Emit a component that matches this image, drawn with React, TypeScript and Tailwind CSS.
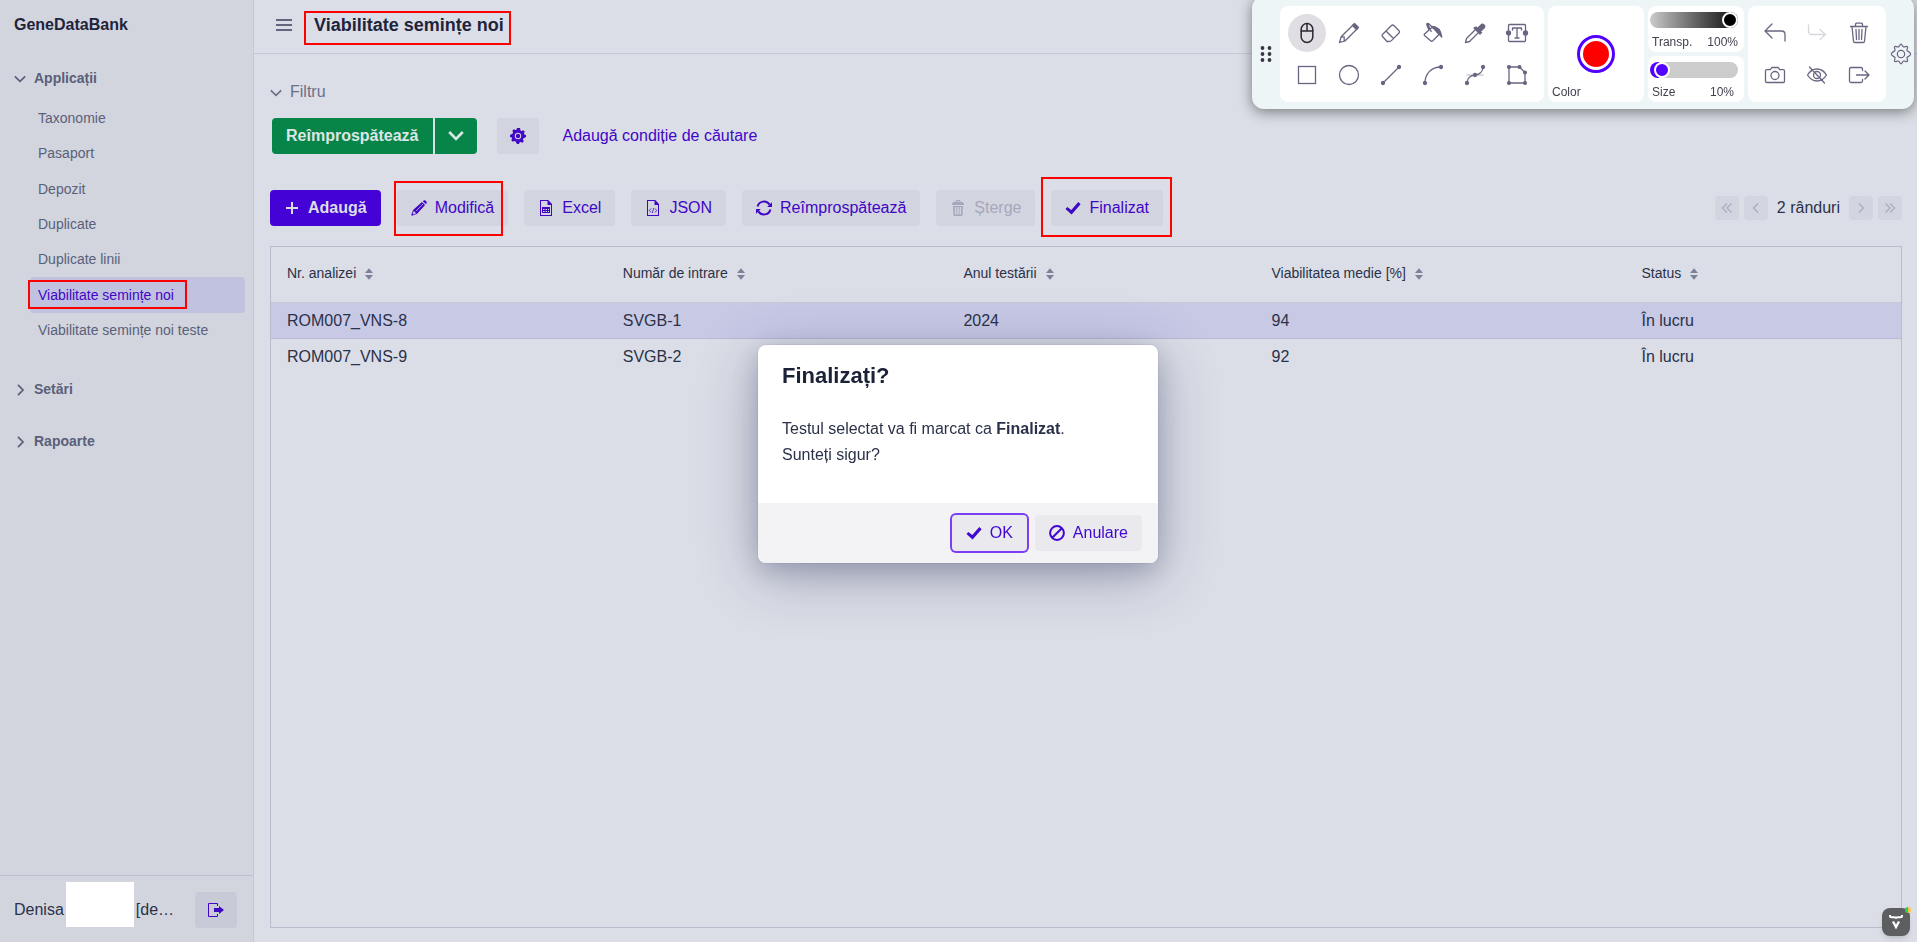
import { useState, type ReactNode } from "react";

type IconProps = { children: ReactNode; className?: string };

/* 16px filled icons */
function Icon({ children, className = "size-4" }: IconProps) {
  return (
    <svg viewBox="0 0 16 16" fill="currentColor" aria-hidden="true" className={`shrink-0 ${className}`}>
      {children}
    </svg>
  );
}

/* 24px outline icons */
function Tool({ children, className = "size-6" }: IconProps) {
  return (
    <svg
      viewBox="0 0 24 24"
      fill="none"
      stroke="currentColor"
      strokeWidth="1.3"
      strokeLinecap="round"
      strokeLinejoin="round"
      aria-hidden="true"
      className={`shrink-0 ${className}`}
    >
      {children}
    </svg>
  );
}

const Chevron = ({ open }: { open: boolean }) => (
  <svg viewBox="0 0 12 12" fill="none" stroke="currentColor" strokeWidth="1.7" aria-hidden="true" className="size-3 shrink-0 translate-y-px">
    <path d={open ? "M.8 3.4 6 8.4l5.2-5" : "M4 .8 9 6l-5 5.2"} />
  </svg>
);

const Check = () => (
  <Icon>
    <path d="M15.6 4.2 13.3 1.9 6.3 9.9 2.3 6.9.5 8.9l6.1 5.5z" />
  </Icon>
);

const Refresh = () => (
  <Icon>
    <path
      d="M1.6 6.6A6.6 6.6 0 0 1 13.6 4.6M14.4 9.4A6.6 6.6 0 0 1 2.4 11.4"
      fill="none"
      stroke="currentColor"
      strokeWidth="2"
    />
    <path d="M16 2.2V7h-4.8zM0 13.8V9h4.8z" />
  </Icon>
);

const Pencil = () => (
  <Icon>
    <path d="M2.3 9.8 11 1.9l3.1 3.1-8 8.8L1 15.8.2 15zM11.8 1.2C13 0 14 0 15 1s1 2 0 3.200zM2.800 11l-1.100 3 .4.4 3-1.200z" fillRule="evenodd" />
    <path d="M5 11.200 12 4" stroke="#d2d5df" strokeWidth=".8" />
  </Icon>
);

const Sheet = () => (
  <Icon>
    <path d="M10.200 0H2v16h12V4zM13 15H3V1h6.500v4H13z" fillRule="evenodd" />
    <path d="M4 7v6h8V7zM5 9h1.500v1H5zm2.500 0H9v1H7.500zM10 9h1v1h-1zm-5 2h1.500v1H5zm2.500 0H9v1H7.500zm2.500 0h1v1h-1z" fillRule="evenodd" />
  </Icon>
);

const CodeFile = () => (
  <Icon>
    <path d="M10.200 0H2v16h12V4zM13 15H3V1h6.500v4H13z" fillRule="evenodd" />
    <path d="M6 8.500 4.300 10.500 6 12.500M10 8.500l1.700 2-1.700 2M8.700 8l-1.400 5" fill="none" stroke="currentColor" strokeWidth=".8" />
  </Icon>
);

const Trash = () => (
  <Icon>
    <path d="M13 3V2h-2.500V1.500C10.500.6 10 0 9 0H7C6 0 5.500.6 5.500 1.500V2H3v1H2v2h12V3zM6.500 1.300h3V2h-3zM3 6l.5 9c.1.600.400 1 1 1h7c.600 0 .900-.400 1-1l.500-9zm3.500 8.500H5L4.800 7h1.400zm2.200 0H7.300V7h1.400zm2.300 0H9.500L9.800 7h1.400z" fillRule="evenodd" />
  </Icon>
);

const Cog = () => (
  <Icon>
    <path d="M16 9V7l-1.700-.6-.4-1 .9-1.700-1.500-1.500-1.700.9-1-.4L10 0H7l-.6 1.700-1 .4-1.600-.8-1.500 1.500.8 1.600-.4 1L0 7v2l1.700.6.4 1-.8 1.700 1.500 1.500 1.600-.9 1 .4L7 16h2l.6-1.700 1-.4 1.700.9 1.500-1.500-.9-1.700.4-1zM8 12.500a4.500 4.500 0 1 1 0-9 4.500 4.500 0 0 1 0 9z" fillRule="evenodd" />
    <circle cx="8" cy="8" r="2.200" />
    <path d="M8 3a5 5 0 1 0 0 10A5 5 0 0 0 8 3zm0 1.800a3.200 3.200 0 1 1 0 6.400 3.200 3.200 0 0 1 0-6.400z" fillRule="evenodd" />
  </Icon>
);

const SignOut = () => (
  <Icon>
    <path d="M9.500 4V1.500h-9v13h9V12" fill="none" stroke="currentColor" />
    <path d="M6 6h5V4l5 4-5 4v-2H6z" />
  </Icon>
);

const Ban = () => (
  <Icon>
    <path d="m3.200 12.800 9.600-9.600M8 1.100a6.900 6.900 0 1 1 0 13.800A6.900 6.900 0 0 1 8 1.100z" fill="none" stroke="currentColor" strokeWidth="2" />
  </Icon>
);

const Sorter = () => (
  <svg viewBox="0 0 8 12" fill="#7d829b" aria-hidden="true" className="h-3 w-2 translate-y-px">
    <path d="M0 5 4 .3 8 5zM0 7h8l-4 4.700z" />
  </svg>
);

/* Highlight rectangle drawn over the page */
const Mark = ({ className }: { className: string }) => (
  <span aria-hidden="true" className={`pointer-events-none absolute border-2 border-[#ff0000] ${className}`} />
);

const apps = ["Taxonomie", "Pasaport", "Depozit", "Duplicate", "Duplicate linii", "Viabilitate semințe noi", "Viabilitate semințe noi teste"];

function Sidebar() {
  return (
    <aside className="flex w-[254px] shrink-0 flex-col border-r border-[#c6c9d5] bg-[#d2d5de]">
      <h2 className="px-3.5 pt-[13px] text-base leading-6 font-bold text-[#1d243b]">GeneDataBank</h2>
      <nav className="flex-1 pt-[31px] text-sm text-[#5a5f7a]">
        <button className="flex h-5 items-center gap-2 px-3.5 font-bold">
          <Chevron open />
          Applicații
        </button>
        <ul className="mt-3 grid h-[248px] grid-rows-7 pr-2 pl-[30px]">
          {apps.map((name, i) => (
            <li key={name} className="relative flex">
              <a
                href="#"
                className={
                  i === 5
                    ? "flex flex-1 items-center rounded bg-[#c1c1e0] px-2 text-[#4106c6]"
                    : "flex flex-1 items-center rounded px-2"
                }
              >
                {name}
              </a>
              {i === 5 && <Mark className="top-[3px] -left-0.5 h-[29px] w-[159px]" />}
            </li>
          ))}
        </ul>
        <button className="mt-[31px] flex h-5 items-center gap-2 px-3.5 font-bold">
          <Chevron open={false} />
          Setări
        </button>
        <button className="mt-8 flex h-5 items-center gap-2 px-3.5 font-bold">
          <Chevron open={false} />
          Rapoarte
        </button>
      </nav>
      <footer className="flex items-center justify-between border-t border-[#bcbfce] py-4 pr-4 pb-3.5 pl-3.5 text-[#2a3149]">
        <div className="flex items-center">
          <span>Denisa</span>
          <span className="mx-0.5 -mt-3 -mb-2 h-[45px] w-[68px] -translate-y-1 bg-white" />
          <span>[de…</span>
        </div>
        <button aria-label="Deconectare" className="flex h-9 w-[42px] items-center justify-center rounded bg-[#c8cad7] text-[#4106c6]">
          <SignOut />
        </button>
      </footer>
    </aside>
  );
}

function Action({ icon, label, disabled = false }: { icon: ReactNode; label: string; disabled?: boolean }) {
  return (
    <button
      disabled={disabled}
      className="flex h-9 items-center gap-2 rounded bg-[#d2d5df] px-3.5 text-[#4106c6] disabled:text-[#a5a8bc]"
    >
      {icon}
      {label}
    </button>
  );
}

function PageButton({ label, d }: { label: string; d: string }) {
  return (
    <button disabled aria-label={label} className="flex size-6 items-center justify-center rounded bg-[#d2d5df] text-[#a9acbf]">
      <svg viewBox="0 0 12 12" fill="none" stroke="currentColor" strokeWidth="1.300" aria-hidden="true" className="size-3">
        <path d={d} />
      </svg>
    </button>
  );
}

const columns = [
  { name: "Nr. analizei", width: "w-[20.6%]" },
  { name: "Număr de intrare", width: "w-[20.9%]" },
  { name: "Anul testării", width: "w-[18.9%]" },
  { name: "Viabilitatea medie [%]", width: "w-[22.7%]" },
  { name: "Status", width: "w-[16.9%]" },
];

const rows = [
  ["ROM007_VNS-8", "SVGB-1", "2024", "94", "În lucru"],
  ["ROM007_VNS-9", "SVGB-2", "2024", "92", "În lucru"],
];

function Main() {
  return (
    <main className="flex min-w-0 flex-1 flex-col bg-[#dbdee6]">
      <header className="flex h-[54px] shrink-0 items-center gap-[22px] border-b border-[#c6c9d5] px-[22px] pb-1">
        <button aria-label="Meniu" className="text-[#62677f]">
          <Icon>
            <path d="M0 2h16v2H0zm0 5h16v2H0zm0 5h16v2H0z" />
          </Icon>
        </button>
        <h1 className="relative text-lg font-bold text-[#1d243b]">
          Viabilitate semințe noi
          <Mark className="top-0 -left-2.5 h-[34px] w-[207px]" />
        </h1>
      </header>
      <div className="flex flex-1 flex-col px-4 pr-[15px] pb-3.5">
        <button className="mt-[26px] flex h-6 items-center gap-2 self-start text-[#6b7088]">
          <Chevron open />
          Filtru
        </button>
        <div className="mt-3.5 flex items-center pl-0.5">
          <button className="h-9 rounded-l bg-[#078549] px-3.5 font-bold text-[#dbe6e6]">Reîmprospătează</button>
          <button aria-label="Opțiuni" className="ml-0.5 flex h-9 w-[42px] items-center justify-center rounded-r bg-[#078549] text-[#dbe6e6]">
            <Icon>
              <path d="m1.200 4 6.800 7 6.800-7" fill="none" stroke="currentColor" strokeWidth="2.600" />
            </Icon>
          </button>
          <button aria-label="Setări filtru" className="ml-5 flex h-9 w-[42px] items-center justify-center rounded bg-[#d2d5df] text-[#4106c6]">
            <Cog />
          </button>
          <button className="ml-6 text-[#4106c6]">Adaugă condiție de căutare</button>
        </div>
        <div className="mt-9 flex items-center justify-between">
          <div className="flex gap-4">
            <button className="flex h-9 items-center gap-2 rounded bg-[#4502d6] px-3.5 font-bold text-[#dbdee6]">
              <Icon>
                <path d="M7 2h2v5h5v2H9v5H7V9H2V7h5z" />
              </Icon>
              Adaugă
            </button>
            <div className="relative">
              <Action icon={<Pencil />} label="Modifică" />
              <Mark className="-top-[9px] -left-[3px] h-[55px] w-[109px]" />
            </div>
            <Action icon={<Sheet />} label="Excel" />
            <Action icon={<CodeFile />} label="JSON" />
            <Action icon={<Refresh />} label="Reîmprospătează" />
            <Action icon={<Trash />} label="Șterge" disabled />
            <div className="relative">
              <Action icon={<Check />} label="Finalizat" />
              <Mark className="-top-[13px] -left-2.5 h-[60px] w-[131px]" />
            </div>
          </div>
          <div className="flex items-center gap-[5px] text-[#2a3149]">
            <PageButton label="Prima pagină" d="M6 1.500 1.500 6 6 10.500M10.500 1.500 6 6l4.500 4.500" />
            <PageButton label="Pagina anterioară" d="M8 1.500 3.500 6 8 10.500" />
            <span className="px-1">2 rânduri</span>
            <PageButton label="Pagina următoare" d="M4 1.500 8.500 6 4 10.500" />
            <PageButton label="Ultima pagină" d="M1.500 1.500 6 6l-4.500 4.500M6 1.500 10.500 6 6 10.500" />
          </div>
        </div>
        <div className="mt-5 flex-1 border border-[#b9bccd]">
          <table className="w-full table-fixed border-separate border-spacing-0 text-left text-[#2a3149]">
            <thead>
              <tr>
                {columns.map((c) => (
                  <th key={c.name} className={`h-14 border-b border-[#c6c9d5] px-4 pb-1 text-sm font-normal ${c.width}`}>
                    <span className="flex items-center gap-[9px]">
                      {c.name}
                      <Sorter />
                    </span>
                  </th>
                ))}
              </tr>
            </thead>
            <tbody>
              {rows.map((r, i) => (
                <tr key={r[0]} className={i === 0 ? "bg-[#c8c9e5]" : ""}>
                  {r.map((v, j) => (
                    <td key={j} className={i === 0 ? "h-9 border-b border-[#b7b9da] px-4" : "h-9 px-4"}>
                      {v}
                    </td>
                  ))}
                </tr>
              ))}
            </tbody>
          </table>
        </div>
      </div>
    </main>
  );
}

function ConfirmDialog() {
  return (
    <div className="fixed inset-0 flex items-center justify-center pr-px pb-[34px]">
      <section
        role="dialog"
        aria-labelledby="confirm-title"
        className="w-[400px] overflow-hidden rounded-lg bg-white text-[#2a3149] shadow-[0_0_0_1px_rgba(30,40,80,0.06),0_8px_24px_rgba(30,35,80,0.2),0_12px_60px_rgba(30,35,80,0.3)]"
      >
        <div className="px-6 pt-[17px] pb-[35px]">
          <h2 id="confirm-title" className="text-[22px] leading-7 font-bold text-[#1b2238]">
            Finalizați?
          </h2>
          <p className="mt-[26px] leading-[26px]">
            Testul selectat va fi marcat ca <b>Finalizat</b>.
            <br />
            Sunteți sigur?
          </p>
        </div>
        <div className="flex justify-end gap-2 bg-[#f3f3f6] px-4 py-3">
          <button className="flex h-9 items-center gap-2 rounded bg-[#e9e9ee] px-3.5 text-[#4106d2] ring-2 ring-[#7a3ff5]">
            <Check />
            OK
          </button>
          <button className="flex h-9 items-center gap-2 rounded bg-[#e9e9ee] px-3.5 text-[#4106d2]">
            <Ban />
            Anulare
          </button>
        </div>
      </section>
    </div>
  );
}

const drawTools: { name: string; art: ReactNode }[] = [
  {
    name: "Mouse",
    art: (
      <g stroke="#2b2833" strokeWidth="1.500">
        <rect x="6.200" y="2.500" width="11.600" height="19" rx="5.800" />
        <path d="M6.200 10h11.600M12 2.500V10" />
      </g>
    ),
  },
  {
    name: "Creion",
    art: (
      <>
        <path d="m2.500 21.500 1.700-5.700L16 4l4 4L8.200 19.800zM4.200 15.800h3v3.500" />
        <path d="m15.500 4.500 2-2 4 4-2 2z" fill="currentColor" />
      </>
    ),
  },
  {
    name: "Radieră",
    art: <path d="M3.500 15.500a1.500 1.500 0 0 1 0-2l9-9c.7-.7 1.600-.7 2.300 0l5.200 5.200c.7.700.7 1.600 0 2.300l-7.600 7.600c-.8.800-1.600.900-2.500.900H8zM7 10l7.500 7.500" />,
  },
  {
    name: "Umplere",
    art: (
      <>
        <path d="M3.500 13 11.500 6l6.500 7.500-6.200 6.300c-.8.700-1.400.700-2.200 0L3.500 14.500c-.5-.5-.5-1 0-1.500zM6.500 2.500l3.700 8M8 9 5.800 3.800c-.2-.800.2-1.300.7-1.300.500 0 1.200.200 1.800.800L12 7" />
        <path d="M11 5.500c5 0 8.500 2.500 9.800 10.500-1.500-.8-2.300-2.500-3-4.500z" fill="currentColor" />
      </>
    ),
  },
  {
    name: "Pipetă",
    art: (
      <>
        <path d="m2.500 21.500 1-4L13 8l3 3-9.500 9.500z" />
        <path d="m11 7 6 6 1.500-1.500-1-1 3.500-3.500c1-1 1-2 0-3s-2-1-3 0l-3.500 3.500-1.500-1.500z" fill="currentColor" />
      </>
    ),
  },
  {
    name: "Text",
    art: (
      <>
        <rect x="3.500" y="3.500" width="17" height="17" rx="1" />
        <path d="M7.500 9V7h9v2M12 7v10M10 17h4" />
        <circle cx="3.500" cy="12" r="2" fill="currentColor" />
        <circle cx="20.500" cy="12" r="2" fill="currentColor" />
      </>
    ),
  },
  { name: "Dreptunghi", art: <rect x="3.500" y="3.500" width="17" height="17" strokeLinejoin="miter" /> },
  { name: "Cerc", art: <circle cx="12" cy="12" r="9.500" /> },
  {
    name: "Linie",
    art: (
      <>
        <path d="M4 20 20 4" />
        <circle cx="4" cy="20" r="1.500" fill="currentColor" />
        <circle cx="20" cy="4" r="1.500" fill="currentColor" />
      </>
    ),
  },
  {
    name: "Arc",
    art: (
      <>
        <path d="M4 20C4 11 10 4 20 4" />
        <circle cx="4" cy="20" r="1.500" fill="currentColor" />
        <circle cx="20" cy="4" r="1.500" fill="currentColor" />
      </>
    ),
  },
  {
    name: "Curbă",
    art: (
      <>
        <path d="M4 12h16" stroke="#cfccd6" />
        <path d="M4 20c0-5 4-7.500 8-8s8-3 8-8" />
        <circle cx="4" cy="20" r="1.500" fill="currentColor" />
        <circle cx="12" cy="12" r="1.500" fill="currentColor" />
        <circle cx="20" cy="4" r="1.500" fill="currentColor" />
      </>
    ),
  },
  {
    name: "Poligon",
    art: (
      <>
        <path d="M4 4h10.500L20 9.500V20H4z" />
        {["4 4", "14.5 4", "20 9.5", "20 20", "4 20"].map((p) => {
          const [x, y] = p.split(" ");
          return <circle key={p} cx={x} cy={y} r="1.400" fill="currentColor" />;
        })}
      </>
    ),
  },
];

const pageTools: { name: string; art: ReactNode }[] = [
  { name: "Anulează", art: <path d="M22 20v-6.500c0-2.500-1-3.500-3.500-3.500H2.500M9 3 2 10l7 7" /> },
  { name: "Refă", art: <path d="M3.500 4v6c0 2.500 1 3.500 3.500 3.500h13.500M15 8.500l5.500 5-5.500 5" stroke="#d9d7de" /> },
  {
    name: "Golește",
    art: <path d="M3.500 5.500h17M8.500 5.500V3.200c0-.700.300-1 1-1h5c.700 0 1 .300 1 1v2.300M5 5.500l1.500 14.700c.1.900.500 1.300 1.300 1.300h8.400c.8 0 1.200-.400 1.300-1.300L19 5.500M9 8.500l.5 10M12 8.500v10M15 8.500l-.5 10" />,
  },
  {
    name: "Captură",
    art: (
      <>
        <path d="M2.500 8c0-.8.500-1.300 1.300-1.300h3.500l1.500-2.200h6.400l1.500 2.200h3.500c.8 0 1.300.500 1.300 1.300v10.200c0 .8-.5 1.300-1.300 1.300H3.800c-.8 0-1.300-.500-1.300-1.300z" />
        <circle cx="12" cy="12.500" r="4" />
      </>
    ),
  },
  {
    name: "Ascunde",
    art: (
      <>
        <path d="M2.500 12C5 8 8.300 6 12 6s7 2 9.500 6c-2.500 4-5.800 6-9.500 6s-7-2-9.500-6zM4.500 4l15 16" />
        <circle cx="12" cy="12" r="3.500" />
      </>
    ),
  },
  {
    name: "Ieșire",
    art: <path d="M15.500 7.500V6c0-1-.500-1.500-1.500-1.500H4C3 4.500 2.500 5 2.500 6v12c0 1 .5 1.500 1.500 1.500h10c1 0 1.500-.500 1.500-1.500v-1.500M9.500 12h12M18 8l4 4-4 4" />,
  },
];

const thumb =
  "[&::-webkit-slider-thumb]:size-4 [&::-webkit-slider-thumb]:appearance-none [&::-webkit-slider-thumb]:rounded-full [&::-webkit-slider-thumb]:border-2 [&::-webkit-slider-thumb]:border-white";

function DrawingBar() {
  const [opacity, setOpacity] = useState(100);
  const [size, setSize] = useState(10);
  return (
    <div
      role="toolbar"
      aria-label="Instrumente de desen"
      className="fixed -top-1 right-[3px] flex h-[113px] items-center gap-1 rounded-xl bg-[#edf5f7] pt-[3px] pr-0.5 pl-1.5 text-xs text-[#45414f] shadow-[0_3px_14px_rgba(0,0,0,0.45)]"
    >
      <svg viewBox="0 0 16 18" fill="#3a3645" aria-hidden="true" className="mr-0.5 h-[18px] w-4">
        {[3, 9, 15].map((y) => (
          <g key={y}>
            <circle cx="4.500" cy={y} r="1.900" />
            <circle cx="11.500" cy={y} r="1.900" />
          </g>
        ))}
      </svg>
      <div className="grid h-24 grid-cols-6 content-center gap-1 rounded-lg bg-white px-2 text-[#6b6480]">
        {drawTools.map((t, i) => (
          <button
            key={t.name}
            aria-label={t.name}
            className={
              i === 0
                ? "flex h-[38px] w-[38px] items-center justify-center rounded-full bg-[#e0dde3]"
                : "flex h-[38px] w-[38px] items-center justify-center"
            }
          >
            <Tool>{t.art}</Tool>
          </button>
        ))}
      </div>
      <button className="relative flex size-24 items-center justify-center rounded-lg bg-white">
        <span className="size-[38px] rounded-full border-[3px] border-[#5200ff] bg-white p-[3px]">
          <span className="block size-full rounded-full bg-[#ff0000]" />
        </span>
        <span className="absolute bottom-0.5 left-1">Color</span>
      </button>
      <div className="flex h-24 w-24 flex-col gap-1">
        <label className="flex flex-1 flex-col justify-between rounded-lg bg-white px-0.5 pt-1.5 pb-0.5">
          <input
            type="range"
            min={5}
            max={100}
            value={opacity}
            onChange={(e) => setOpacity(+e.target.value)}
            className={`h-4 w-[88px] appearance-none rounded-full bg-linear-to-r from-[#cccccc] to-[#111111] [&::-webkit-slider-thumb]:bg-black ${thumb}`}
          />
          <span className="flex justify-between pr-1 pl-0.5">
            <span>Transp.</span>
            <span>{opacity}%</span>
          </span>
        </label>
        <label className="flex flex-1 flex-col justify-between rounded-lg bg-white px-0.5 pt-1.5 pb-0.5">
          <input
            type="range"
            min={5}
            max={100}
            value={size}
            onChange={(e) => setSize(+e.target.value)}
            className={`h-4 w-[88px] appearance-none rounded-full bg-linear-to-r from-[#5200ff] from-10% to-[#cccccc] to-10% [&::-webkit-slider-thumb]:bg-[#5200ff] ${thumb}`}
          />
          <span className="flex justify-between pr-2 pl-0.5">
            <span>Size</span>
            <span>{size}%</span>
          </span>
        </label>
      </div>
      <div className="grid h-24 grid-cols-3 content-center gap-1 rounded-lg bg-white px-2 text-[#6b6480]">
        {pageTools.map((t) => (
          <button key={t.name} aria-label={t.name} className="flex h-[38px] w-[38px] items-center justify-center">
            <Tool>{t.art}</Tool>
          </button>
        ))}
      </div>
      <button aria-label="Preferințe" className="text-[#6b6480]">
        <Tool className="size-[22px]">
          <path d="M12 1.200c1.200 0 1.500 2.600 2.800 3.100s3.300-1.300 4.200-.4-1 2.900-.4 4.200 3.900 1.700 3.900 3.900-3.400 2.600-3.900 3.900 1.300 3.300.4 4.200-2.900-1-4.200-.4-1.600 3.100-2.800 3.100-1.500-2.600-2.800-3.100-3.300 1.300-4.200.4 1-2.900.4-4.200S1.500 14.200 1.500 12s3.400-2.600 3.900-3.900-1.300-3.300-.4-4.200 2.900 1 4.200.4S10.800 1.200 12 1.200z" />
          <circle cx="12" cy="12" r="4" />
        </Tool>
      </button>
    </div>
  );
}

function DevBadge() {
  return (
    <button aria-label="Unelte dezvoltator" className="fixed right-[7px] bottom-1.5 size-7 rounded-lg bg-[#5d5e60] shadow-md">
      <svg viewBox="0 0 28 28" fill="none" stroke="#fff" strokeWidth="2" aria-hidden="true" className="size-7">
        <path d="M8 7v1c0 .8.400 1.200 1.200 1.200h3c1.200 0 1.800.4 1.800 1.600 0-1.200.600-1.600 1.800-1.600h3c.8 0 1.200-.4 1.200-1.200V7" />
        <path d="m11 13.500 3 5.500 3-5.500" strokeWidth="2.400" />
      </svg>
      <span className="absolute -top-px -right-px size-1.5 rounded-full bg-linear-to-r from-[#1fd15c] from-50% to-[#ffc247] to-50%" />
    </button>
  );
}

export default function App() {
  return (
    <div className="flex min-h-screen font-['Liberation_Sans',Arial,sans-serif] text-base">
      <Sidebar />
      <Main />
      <ConfirmDialog />
      <DrawingBar />
      <DevBadge />
    </div>
  );
}
